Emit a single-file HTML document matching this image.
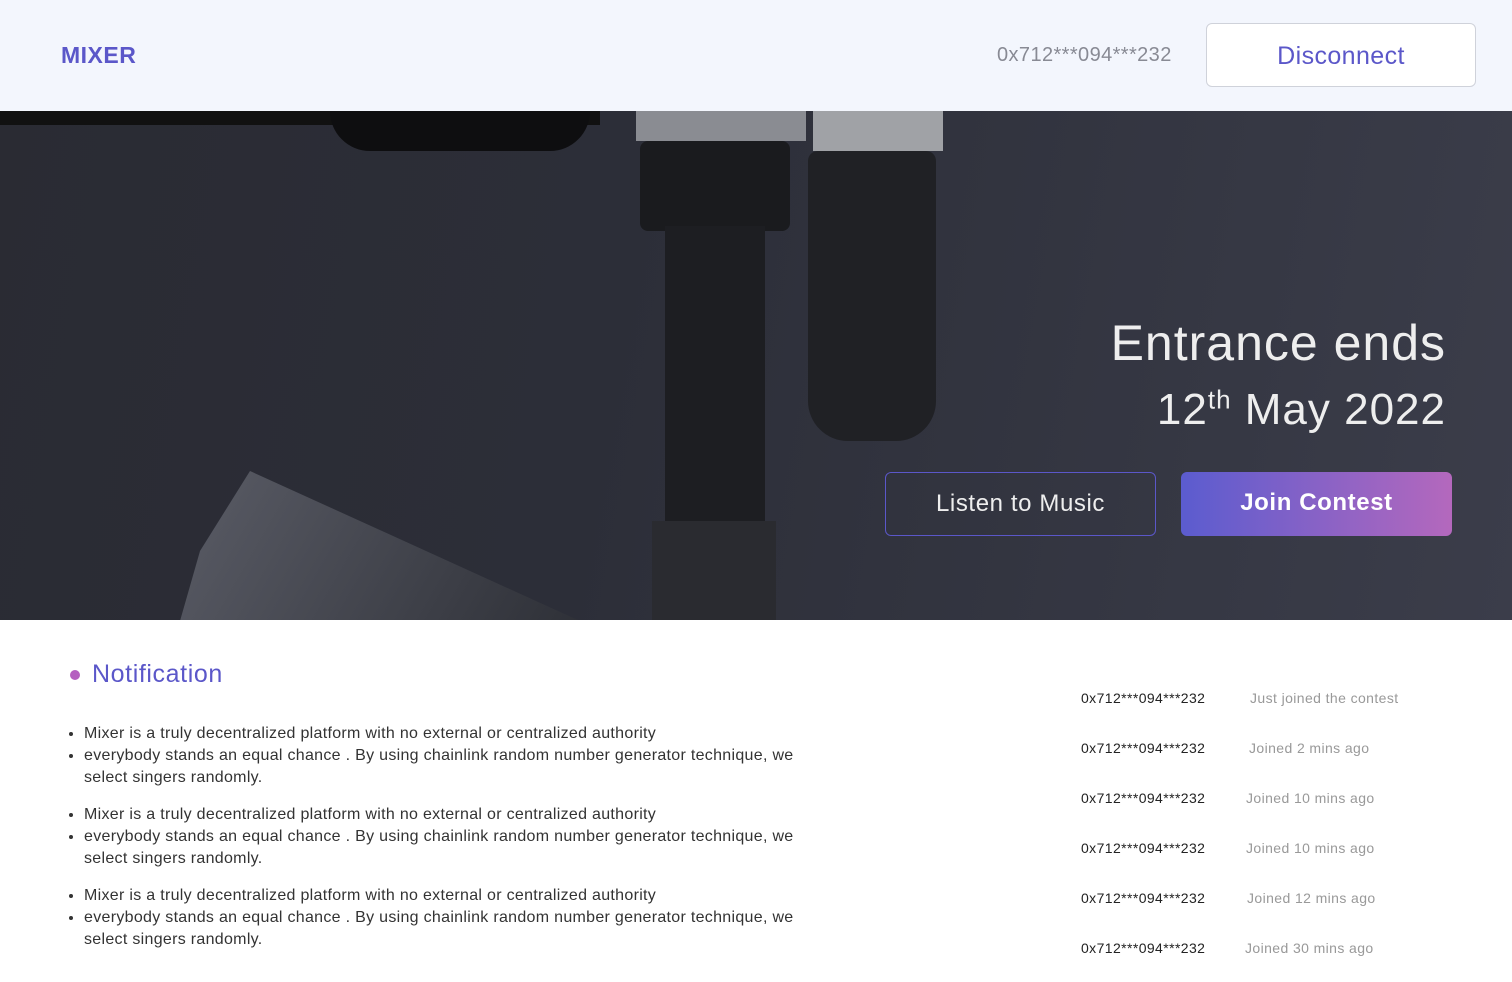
<!DOCTYPE html>
<html><head><style>
body{margin:0;width:1512px;height:982px;overflow:hidden;background:#fff;font-family:"Liberation Sans",sans-serif;position:relative}
.hdr{position:absolute;left:0;top:0;width:1512px;height:111px;background:#f3f6fd}
.logo{position:absolute;left:61px;top:42px;font-size:23px;font-weight:bold;color:#5b57c9;letter-spacing:.5px}
.addr{position:absolute;left:997px;top:44px;font-size:20px;color:#888a94;letter-spacing:.4px}
.disc{position:absolute;left:1206px;top:23px;width:270px;height:64px;border:1px solid #cfd2da;border-radius:6px;background:#fff;color:#5b57c9;font-size:25px;text-align:center;line-height:64px;box-sizing:border-box;letter-spacing:.4px}
.hero{position:absolute;left:0;top:111px;width:1512px;height:509px;background:linear-gradient(100deg,#2a2b33 0%,#2c2e38 40%,#3b3d4a 100%);overflow:hidden}
.t1{position:absolute;right:66px;top:316px;font-size:50px;color:#eee;text-align:right;line-height:54px;letter-spacing:1px;font-weight:500}
.t1 .l2{font-size:44px;line-height:58px}
.btn{position:absolute;top:472px;width:271px;height:64px;border-radius:6px;box-sizing:border-box;text-align:center;line-height:62px;font-size:24px;color:#eee;letter-spacing:.6px}
.b1{left:885px;border:1px solid #5b57c9}
.b2{left:1181px;background:linear-gradient(90deg,#5b5ccf,#b468bd);font-weight:bold;color:#fff}
.nt{position:absolute;left:92px;top:660px;font-size:25px;color:#5b57c9;letter-spacing:.6px}
.dot{position:absolute;left:70px;top:670px;width:10px;height:10px;border-radius:50%;background:#b55fc0}
ul{position:absolute;left:66px;margin:0;padding-left:18px;font-size:16px;color:#333;line-height:22px;width:740px;letter-spacing:.3px}
.r{position:absolute;font-size:14px;letter-spacing:.4px}
.a{left:1081px;color:#222}.j{color:#999}
</style></head><body>
<div class="hdr"><div class="logo">MIXER</div><div class="addr">0x712***094***232</div><div class="disc">Disconnect</div></div>
<div class="hero">
<div style="position:absolute;left:0;top:0;width:600px;height:14px;background:#111"></div>
<div style="position:absolute;left:330px;top:0;width:260px;height:40px;background:#0e0e10;border-radius:0 0 120px 120px"></div>
<div style="position:absolute;left:636px;top:0;width:170px;height:30px;background:#8a8c92"></div>
<div style="position:absolute;left:813px;top:0;width:130px;height:40px;background:#a0a2a6"></div>
<div style="position:absolute;left:640px;top:30px;width:150px;height:90px;background:#1a1b1e;border-radius:8px"></div>
<div style="position:absolute;left:665px;top:115px;width:100px;height:300px;background:#1d1e22"></div>
<div style="position:absolute;left:808px;top:40px;width:128px;height:290px;background:#202125;border-radius:10px 10px 40px 40px"></div>
<div style="position:absolute;left:652px;top:410px;width:124px;height:110px;background:#2a2b30"></div>
<div style="position:absolute;left:180px;top:360px;width:420px;height:150px;background:linear-gradient(120deg,#5a5c66,#2d2f36);clip-path:polygon(70px 0,400px 150px,0 150px,20px 80px)"></div>
</div>
<div class="t1"><span>Entrance ends</span><br><span class="l2">12<sup style="font-size:26px">th</sup> May 2022</span></div>
<div class="btn b1">Listen to Music</div><div class="btn b2">Join Contest</div>
<div class="dot"></div><div class="nt">Notification</div>
<ul style="top:723px"><li>Mixer is a truly decentralized platform with no external or centralized authority</li><li>everybody stands an equal chance . By using chainlink random number generator technique, we select singers randomly.</li></ul>
<ul style="top:804px"><li>Mixer is a truly decentralized platform with no external or centralized authority</li><li>everybody stands an equal chance . By using chainlink random number generator technique, we select singers randomly.</li></ul>
<ul style="top:885px"><li>Mixer is a truly decentralized platform with no external or centralized authority</li><li>everybody stands an equal chance . By using chainlink random number generator technique, we select singers randomly.</li></ul>
<div class="r a" style="top:690px">0x712***094***232</div><div class="r j" style="top:690px;left:1250px">Just joined the contest</div>
<div class="r a" style="top:740px">0x712***094***232</div><div class="r j" style="top:740px;left:1249px">Joined 2 mins ago</div>
<div class="r a" style="top:790px">0x712***094***232</div><div class="r j" style="top:790px;left:1246px">Joined 10 mins ago</div>
<div class="r a" style="top:840px">0x712***094***232</div><div class="r j" style="top:840px;left:1246px">Joined 10 mins ago</div>
<div class="r a" style="top:890px">0x712***094***232</div><div class="r j" style="top:890px;left:1247px">Joined 12 mins ago</div>
<div class="r a" style="top:940px">0x712***094***232</div><div class="r j" style="top:940px;left:1245px">Joined 30 mins ago</div>
</body></html>
